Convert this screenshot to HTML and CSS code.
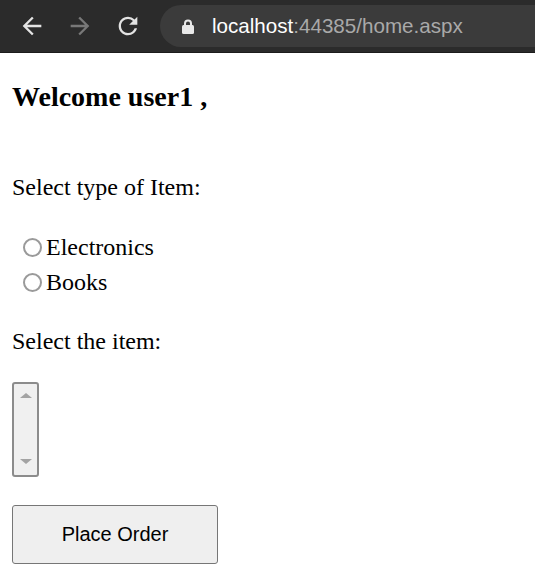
FILE: index.html
```html
<!DOCTYPE html>
<html lang="en">
<head>
<meta charset="utf-8">
<title>home.aspx</title>
<link rel="stylesheet" href="styles.css">
</head>
<body>
<header class="toolbar">
  <span class="navbtn">
    <svg width="28" height="28" viewBox="0 0 24 24"><path fill="#e3e3e3" d="M20 11H7.830l5.590-5.590L12 4l-8 8 8 8 1.410-1.410L7.830 13H20v-2z"/></svg>
  </span>
  <span class="navbtn">
    <svg width="28" height="28" viewBox="0 0 24 24"><path fill="#787878" d="M4 11h12.17l-5.59-5.59L12 4l8 8-8 8-1.41-1.41L16.17 13H4v-2z"/></svg>
  </span>
  <span class="navbtn">
    <svg width="28" height="28" viewBox="0 0 24 24"><path fill="#e3e3e3" d="M17.65 6.35A7.958 7.958 0 0 0 12 4c-4.42 0-7.99 3.58-7.99 8s3.57 8 7.99 8c3.73 0 6.84-2.55 7.73-6h-2.08A5.99 5.99 0 0 1 12 18c-3.31 0-6-2.69-6-6s2.690-6 6-6c1.66 0 3.14.69 4.22 1.78L13 11h7V4l-2.35 2.35z"/></svg>
  </span>
  <div class="omnibox">
    <svg class="lock" width="12" height="15" viewBox="0 0 12 15"><path fill="none" stroke="#e8e8e8" stroke-width="2" d="M3 7V4.5a3 3 0 0 1 6 0V7"/><rect x="0" y="6" width="12" height="9" rx="1.5" fill="#e8e8e8"/></svg>
    <span class="url"><span class="host">localhost</span>:44385/home.aspx</span>
  </div>
</header>
<main class="page">
  <h3 class="welcome">Welcome user1 ,</h3>
  <p class="prompt prompt-type">Select type of Item:</p>
  <div class="radios">
    <label class="radio-row"><input type="radio" name="type" class="radio">Electronics</label>
    <label class="radio-row"><input type="radio" name="type" class="radio">Books</label>
  </div>
  <p class="prompt prompt-item">Select the item:</p>
  <div class="listbox"><span class="arrow-up"></span><span class="arrow-down"></span></div>
  <button class="order" type="button">Place Order</button>
</main>
</body>
</html>
```
FILE: styles.css
```css
html, body {
  margin: 0;
  padding: 0;
  background: #ffffff;
}
body {
  font-family: "Liberation Serif", "Times New Roman", serif;
  color: #000;
}
.toolbar {
  display: flex;
  align-items: center;
  height: 52px;
  background: #2b2b2b;
  border-bottom: 1px solid #1c1c1c;
  padding-left: 8px;
  overflow: hidden;
}
.navbtn {
  flex: none;
  width: 48px;
  height: 42px;
  display: flex;
  align-items: center;
  justify-content: center;
}
.omnibox {
  flex: 1;
  height: 42px;
  margin-left: 8px;
  margin-right: -30px;
  border-radius: 21px;
  background: #3b3b3b;
  display: flex;
  align-items: center;
  padding-left: 22px;
}
.lock {
  flex: none;
}
.url {
  margin-left: 18px;
  font-family: "Liberation Sans", Arial, sans-serif;
  font-size: 20.6px;
  color: #a9a9a9;
  white-space: nowrap;
}
.host {
  color: #ffffff;
}
.page {
  padding: 0 12px;
}
.welcome {
  margin: 28px 0 0;
  font-size: 28px;
  line-height: 32px;
  font-weight: bold;
}
.prompt {
  margin: 0;
  font-size: 24px;
  line-height: 28px;
}
.prompt-type {
  margin-top: 60px;
}
.radios {
  margin-top: 29px;
}
.radio-row {
  display: flex;
  align-items: center;
  height: 35px;
  padding-left: 11px;
  font-size: 24px;
}
.radio {
  appearance: none;
  -webkit-appearance: none;
  box-sizing: border-box;
  width: 19px;
  height: 19px;
  margin: 0 4px 0 0;
  border: 2px solid #9a9a9a;
  border-radius: 50%;
  background: #fff;
}
.prompt-item {
  margin-top: 27px;
}
.listbox {
  box-sizing: border-box;
  width: 27px;
  height: 95px;
  margin-top: 27px;
  border: 2px solid #8c8c8c;
  border-radius: 3px;
  background: #f0f0f0;
  display: flex;
  flex-direction: column;
  align-items: center;
  justify-content: space-between;
  padding: 9px 0 11px;
}
.arrow-up {
  width: 0;
  height: 0;
  border-left: 6px solid transparent;
  border-right: 6px solid transparent;
  border-bottom: 5px solid #a3a3a3;
}
.arrow-down {
  width: 0;
  height: 0;
  border-left: 6px solid transparent;
  border-right: 6px solid transparent;
  border-top: 5px solid #a3a3a3;
}
.order {
  display: block;
  box-sizing: border-box;
  width: 206px;
  height: 59px;
  margin-top: 28px;
  padding: 0;
  background: #efefef;
  border: 1px solid #767676;
  border-radius: 3px;
  font-family: "Liberation Sans", Arial, sans-serif;
  font-size: 20px;
  color: #000;
}
```
